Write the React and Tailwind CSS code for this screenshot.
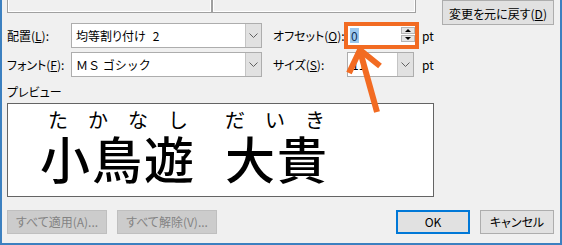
import { useState } from "react";

const Chevron = () => (
  <svg width="9" height="5" viewBox="0 0 9 5">
    <polyline points="0.5,0.5 4.5,4.5 8.5,0.5" fill="none" stroke="#606060" strokeWidth="1" />
  </svg>
);

function Combo({ width, children }) {
  return (
    <div className={`${width} h-[25px] flex bg-white border border-[#adadad]`}>
      <div className="flex-1 flex items-center pl-[4px] overflow-hidden whitespace-nowrap">{children}</div>
      <div className="w-[16px] flex items-center justify-center bg-[#e1e1e1] border-l border-[#c4c4c4]">
        <Chevron />
      </div>
    </div>
  );
}

function Label({ width, text, accel }) {
  return (
    <div className={`${width} whitespace-nowrap`}>
      {text}(<span className="underline">{accel}</span>):
    </div>
  );
}

export default function App() {
  const [offset] = useState("0");

  return (
    <div className="relative w-[562px] h-[245px] overflow-hidden bg-[#f0f0f0] border-l-2 border-r-2 border-b-2 border-[#3c80c0] pl-[5px] text-[12px] leading-[14px] text-black font-['Noto_Sans_CJK_JP',sans-serif] [font-feature-settings:'palt']">
      {/* top: cut off boxes + reset button */}
      <div className="flex items-start h-[25px]">
        <div className="w-[205px] h-[13px] border border-t-0 border-[#a0a0a0] shadow-[inset_1px_-1px_0_#fff,inset_-1px_0_0_#fff]" />
        <div className="w-[204px] h-[13px] border border-t-0 border-[#a0a0a0] shadow-[inset_1px_-1px_0_#fff,inset_-1px_0_0_#fff]" />
        <button className="ml-[26px] w-[112px] h-[25px] pt-[2px] bg-[#e1e1e1] border border-[#adadad] whitespace-nowrap">
          変更を元に戻す(<span className="underline">D</span>)
        </button>
      </div>

      {/* row 1 */}
      <div className="flex items-center h-[25px] -mt-[2px]">
        <Label width="w-[64px]" text="配置" accel="L" />
        <Combo width="w-[191px]">
          均等割り付け <span className="ml-[7px]">2</span>
        </Combo>
        <Label width="ml-[11px] w-[71px]" text="オフセット" accel="O" />
        <div className="w-[75px] h-[27px] border-[4px] border-[#f26b22] bg-white flex">
          <div className="flex-1 flex items-center pl-[2px]">
            <span className="bg-[#9cc8ee] text-[#10305a] px-[1px] leading-[15px]">{offset}</span>
          </div>
          <div className="w-[14px] flex flex-col gap-[1px] py-[1px]">
            <div className="h-[7px] bg-[#e5e5e5] border border-[#b5b5b5] flex items-center justify-center">
              <div className="w-0 h-0 border-l-[3px] border-r-[3px] border-b-[3px] border-l-transparent border-r-transparent border-b-black" />
            </div>
            <div className="h-[7px] bg-[#e5e5e5] border border-[#b5b5b5] flex items-center justify-center">
              <div className="w-0 h-0 border-l-[3px] border-r-[3px] border-t-[3px] border-l-transparent border-r-transparent border-t-black" />
            </div>
          </div>
        </div>
        <span className="ml-[3px]">pt</span>
      </div>

      {/* row 2 */}
      <div className="flex items-center h-[25px] mt-[4px]">
        <Label width="w-[64px]" text="フォント" accel="F" />
        <Combo width="w-[191px]">
          <span className="[font-feature-settings:normal]">ＭＳ ゴシック</span>
        </Combo>
        <Label width="ml-[11px] w-[74px]" text="サイズ" accel="S" />
        <Combo width="w-[67px]">11</Combo>
        <span className="ml-[8px]">pt</span>
      </div>

      <div className="mt-[8px]">プレビュー</div>

      {/* preview */}
      <div className="mt-[4px] w-[427px] h-[94px] bg-white border border-[#646464] pt-[6px] whitespace-nowrap [font-feature-settings:normal]">
        <div className="flex text-[20px] leading-[20px] tracking-[20px] font-normal">
          <span className="ml-[40px]">たかなし</span>
          <span className="ml-[17px]">だいき</span>
        </div>
        <div className="flex mt-[2px] text-[50px] leading-[50px] tracking-[2px] font-medium">
          <span className="ml-[32px]">小鳥遊</span>
          <span className="ml-[29px]">大貴</span>
        </div>
      </div>

      {/* bottom buttons */}
      <div className="flex mt-[13px]">
        <button className="w-[100px] h-[24px] bg-[#cccccc] border border-[#bfbfbf] text-[#838383]">すべて適用(A)...</button>
        <button className="ml-[10px] w-[100px] h-[24px] bg-[#cccccc] border border-[#bfbfbf] text-[#838383]">すべて解除(V)...</button>
        <button className="ml-[179px] w-[74px] h-[24px] bg-[#e1e1e1] border-2 border-[#0078d7]">OK</button>
        <button className="ml-[10px] w-[74px] h-[24px] bg-[#e1e1e1] border border-[#adadad]">キャンセル</button>
      </div>

      {/* arrow pointing at the offset box */}
      <svg className="absolute left-[338px] top-[44px] pointer-events-none" width="50" height="72" viewBox="0 0 50 72">
        <polyline points="9,29 20,6 40,22" fill="none" stroke="#f26b22" strokeWidth="6" strokeLinejoin="miter" />
        <line x1="20" y1="7" x2="37" y2="68" stroke="#f26b22" strokeWidth="6" />
      </svg>
    </div>
  );
}
